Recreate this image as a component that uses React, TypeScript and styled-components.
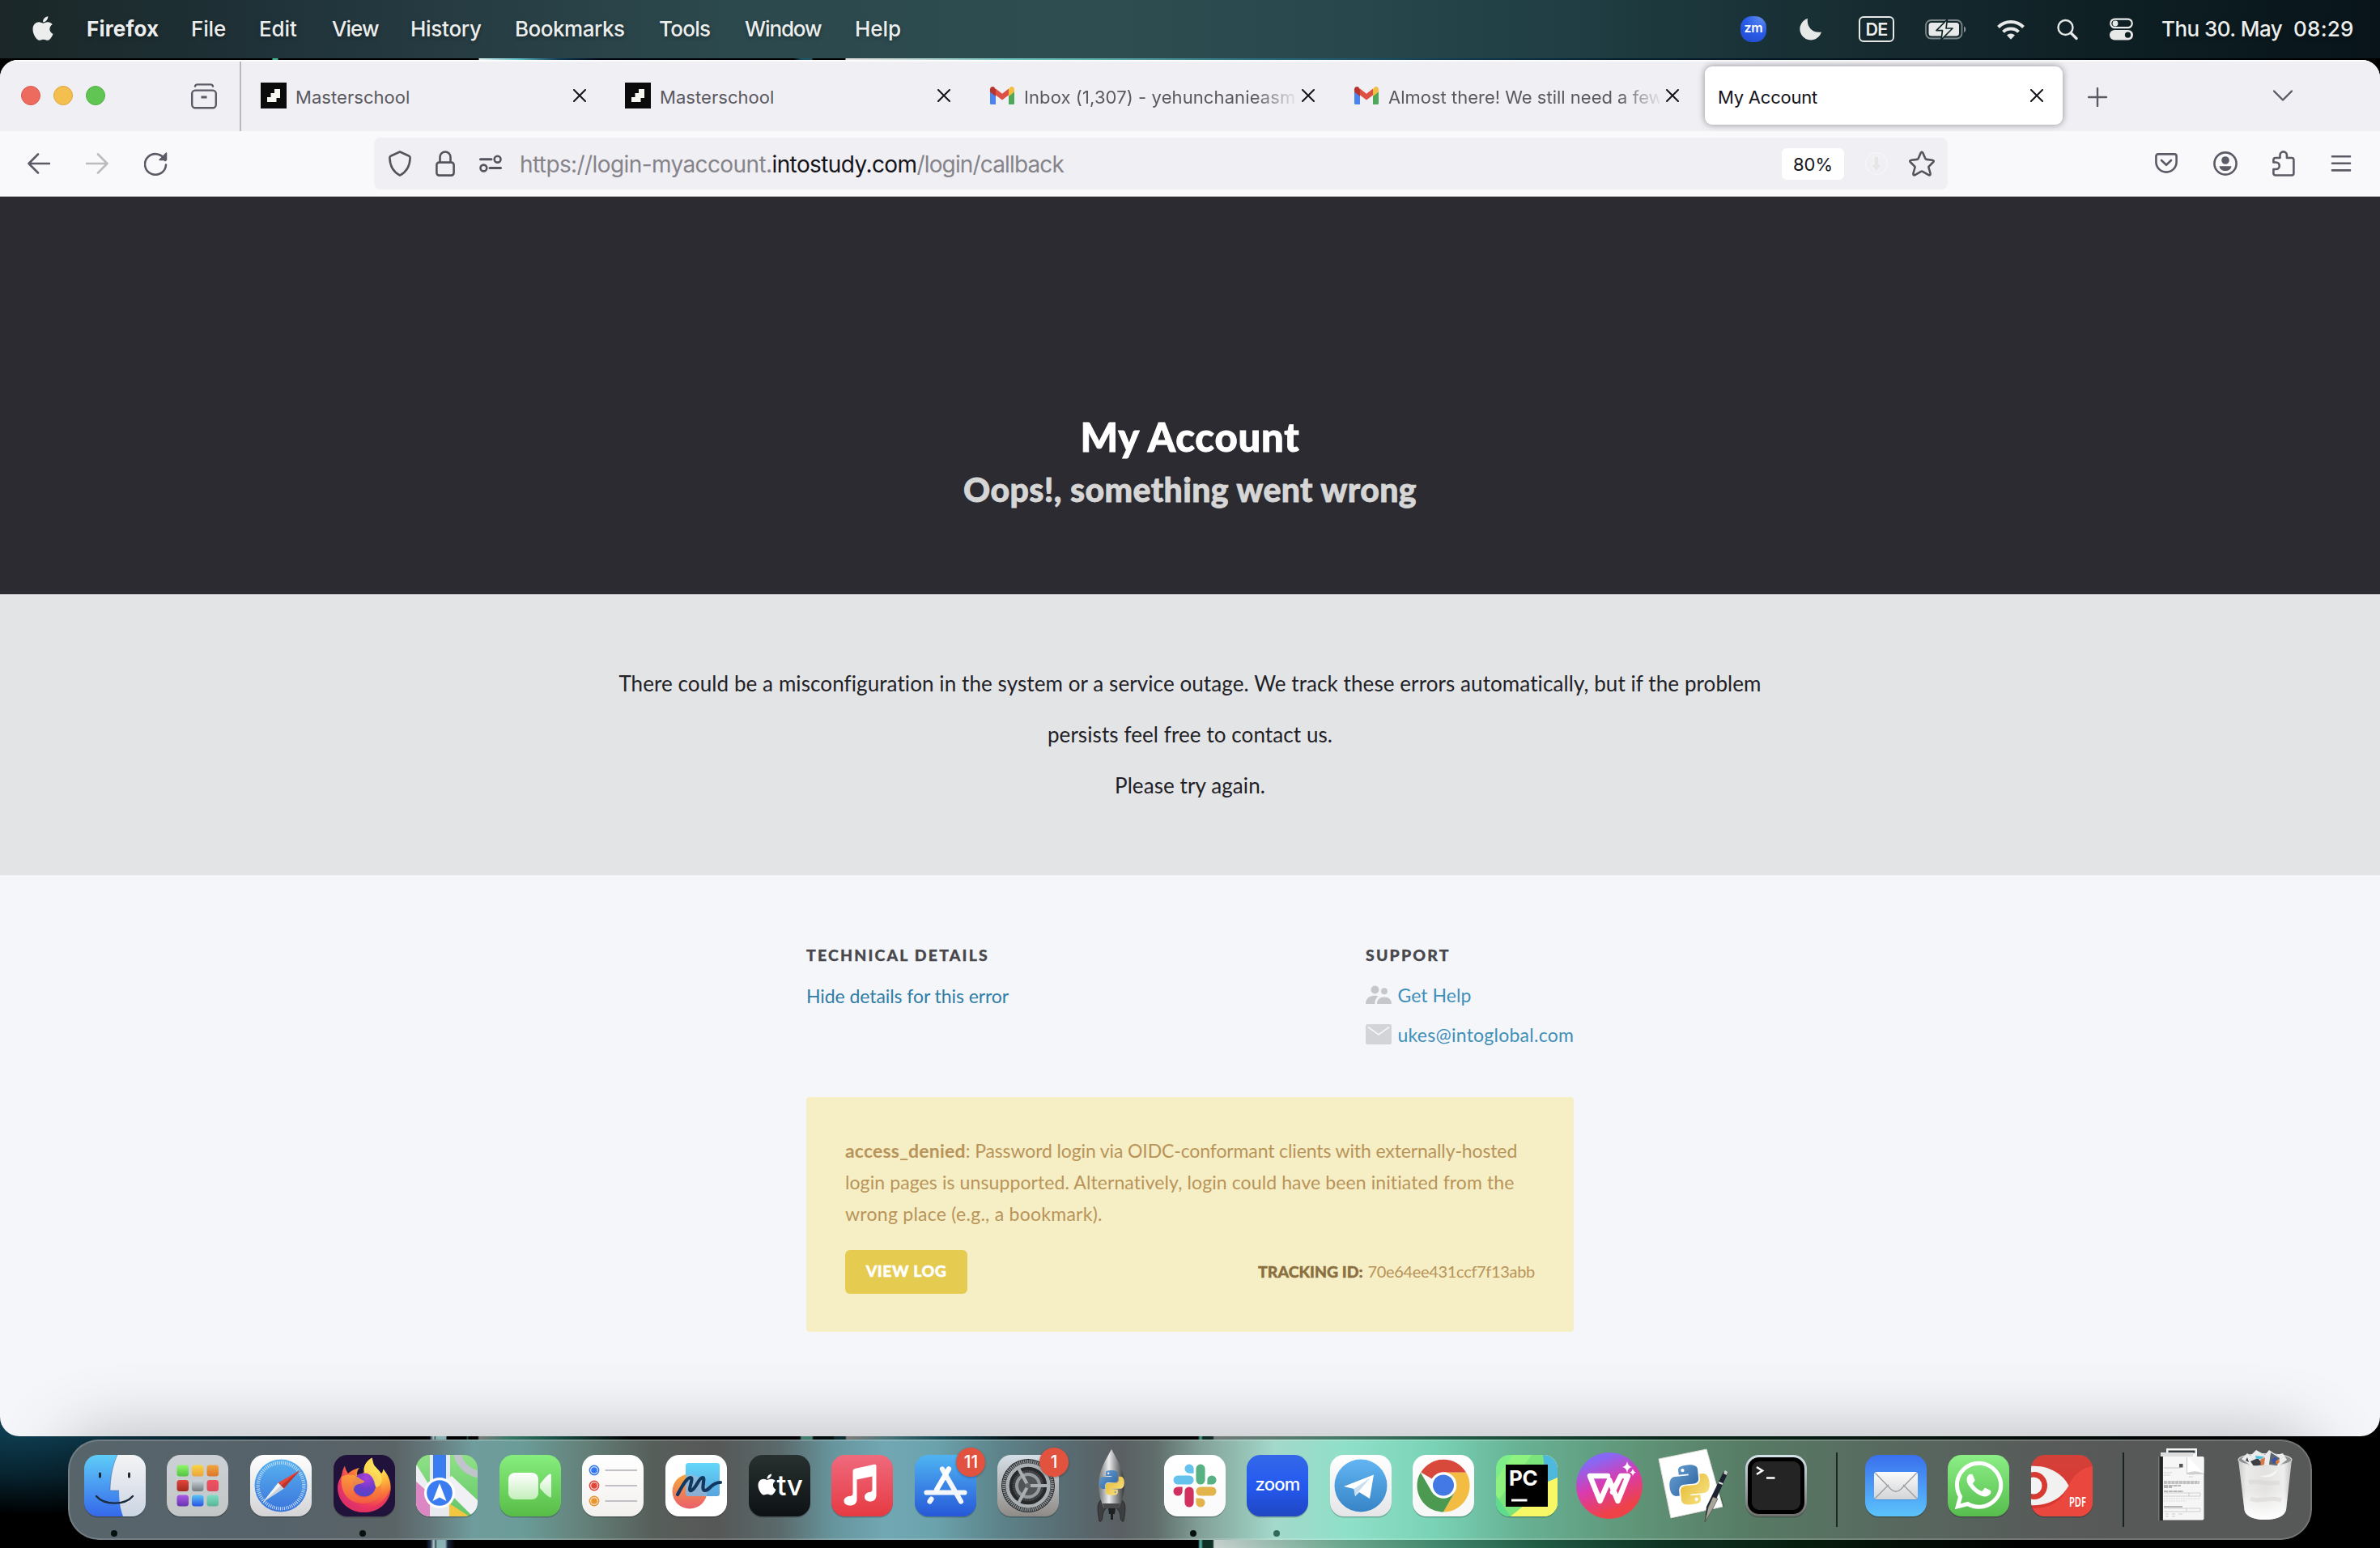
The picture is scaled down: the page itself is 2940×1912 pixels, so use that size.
import React from "react";
import styled, { createGlobalStyle } from "styled-components";
import { FaApple, FaWhatsapp } from "react-icons/fa";

const ui = `Inter, "Liberation Sans", sans-serif`;
const copy = `Lato, "Open Sans", sans-serif`;
const chrome = "#5b5b66";

const GlobalStyle = createGlobalStyle`
  * { box-sizing: border-box; }
  body { margin: 0; background: #000; }
  svg { display: block; flex: none; }
  h1, h2, h3, p { margin: 0; }
`;

/* ---------- desktop ---------- */

const Desktop = styled.div`
  width: 2940px;
  height: 1912px;
  overflow: hidden;
  display: flex;
  flex-direction: column;
  font-family: ${ui};
  background:
    linear-gradient(90deg, #000 336px, #3fb795 337px 343px, #000 344px 591px, #d9f0ec 592px, #63c0cc 640px, #0d3a58 690px, #010513 740px, #000 980px, #1e5566 990px 1003px, #000 1004px 1044px, #e4dfdc 1045px, #b9d6d2 1140px, #6fc3c0 1250px, #5aa6a8 1380px, #2b6d80 1550px, #0f3a52 1800px, #04202f 2000px, #02101a 2400px, #000 2900px) 0 72px / 2940px 2px no-repeat,
    linear-gradient(90deg, transparent 531px, #38506c 532px, #d5e9ea 536px, #3a5b62 537px, #9fced0 539px 551px, transparent 552px 576px, #1c4a40 577px 578px, transparent 579px 590px, #8a908c 592px, #3d8a74 630px, #1d5a50 690px, #000 780px, #000 988px, #4f9484 990px 1003px, #02100d 1005px 1029px, #12343a 1031px 1044px, #93908c 1046px, #4f8488 1100px, #1d5561 1160px, #021014 1260px, #000 1400px, transparent 1440px) 0 1774px / 2940px 4px no-repeat,
    linear-gradient(90deg, transparent 1480px, #4aa596 1482px 1484px, #122f28 1486px 1498px, #858d8a 1500px, #57907c 1640px, #2a6a52 1800px, #0c2e20 2050px, #04140d 2400px, #000 2800px) 0 1774px / 2940px 4px no-repeat,
    linear-gradient(90deg, transparent 526px, #24385a 532px, #dcecee 536px, #35565e 538px, #9fcdd0 540px 550px, #1b2a44 553px, transparent 562px, transparent 1480px, #58b9ab 1482px 1484px, #11382c 1486px 1498px, #e4efec 1500px, #b2d8ca 1570px, #7cc0a4 1660px, #4a9a7c 1780px, #26694f 1900px, #113c2a 2050px, #08200f 2240px, #000 2500px) 0 1902px / 2940px 10px no-repeat,
    radial-gradient(ellipse 460px 110px at 40px 1762px, #104257, #082430 55%, transparent) 0 0 / 2940px 1912px no-repeat,
    #000;
`;

/* ---------- menu bar ---------- */

const MenuBar = styled.header`
  height: 72px;
  margin-bottom: 2px;
  flex: none;
  display: flex;
  align-items: center;
  padding-left: 40px;
  color: #eceeed;
  text-shadow: 0 2px 5px rgba(0, 0, 0, 0.35);
  background: linear-gradient(90deg, #1b2728 0, #1c2c2f 150px, #20333a 350px, #263c42 560px, #2c494d 900px, #2d4d51 1350px, #28484d 1640px, #1f3d42 1960px, #15292e 2350px, #0d1e22 2650px, #08141a 2940px);
`;

const AppleMark = styled(FaApple)`
  width: 26px;
  height: 34px;
  margin: 0 41px 3px 0;
`;

const MenuItem = styled.span<{ $step: number; $track: number; $bold?: boolean }>`
  width: ${(p) => p.$step}px;
  flex: none;
  font-size: 26px;
  line-height: 71px;
  height: 72px;
  font-weight: ${(p) => (p.$bold ? 700 : 500)};
  letter-spacing: ${(p) => p.$track}px;
  white-space: nowrap;
`;

const StatusArea = styled.div`
  width: 790px;
  margin-left: auto;
  display: flex;
  align-items: center;
`;

const StatusSlot = styled.div<{ $gap?: number }>`
  margin-left: ${(p) => p.$gap ?? 0}px;
  flex: none;
`;

const ZoomDot = styled.div`
  width: 32px;
  height: 32px;
  border-radius: 14px;
  background: radial-gradient(circle at 80% 5%, #5a8bee, #2a5be8 50%, #2148c9);
  color: #fff;
  font: 600 16px/29px ${ui};
  letter-spacing: -0.2px;
  text-align: center;
  text-shadow: none;
`;

const LayoutBadge = styled.div`
  width: 44px;
  height: 32px;
  border: 2.5px solid #e6e9e8;
  border-radius: 6px;
  font: 600 21.5px/28px ${ui};
  letter-spacing: -0.8px;
  text-align: center;
`;

/* ---------- browser window ---------- */

const Window = styled.section`
  height: 1700px;
  flex: none;
  border-radius: 22px 22px 24px 24px;
  overflow: hidden;
  display: flex;
  flex-direction: column;
  background: #f5f6fa;
`;

const TabStrip = styled.div`
  height: 88px;
  flex: none;
  display: flex;
  align-items: center;
  background: #f0eff4;
  box-shadow: inset 0 2px 0 #fcfcfd;
`;

const Lights = styled.div`
  display: flex;
  gap: 16px;
  padding-left: 26px;
`;

const Light = styled.i<{ $fill: string; $edge: string }>`
  width: 24px;
  height: 24px;
  border-radius: 50%;
  background: ${(p) => p.$fill};
  border: 1px solid ${(p) => p.$edge};
`;

const RecentView = styled.div`
  width: 62px;
  height: 86px;
  margin: 2px 6px 0 106px;
  display: flex;
  align-items: center;
  border-right: 2px solid #b9b8bd;
`;

const Tab = styled.div<{ $active?: boolean }>`
  width: ${(p) => (p.$active ? 442 : 450)}px;
  margin: 0 ${(p) => (p.$active ? "6px 0 2px" : "0")};
  height: 72px;
  flex: none;
  display: flex;
  align-items: center;
  padding: 0 ${(p) => (p.$active ? "24px 0 16px" : "30px 0 18px")};
  border-radius: 9px;
  color: ${(p) => (p.$active ? "#15141a" : "#5a595f")};
  background: ${(p) => (p.$active ? "#fff" : "transparent")};
  box-shadow: ${(p) => (p.$active ? "0 0 8px rgba(0,0,0,.42)" : "none")};
`;

const Favicon = styled.div`
  width: 32px;
  height: 32px;
  margin: 0 11px 0 0;
  flex: none;
`;

const TabTitle = styled.div<{ $track?: number; $fade?: boolean }>`
  flex: 1;
  min-width: 0;
  white-space: nowrap;
  font-size: 22px;
  line-height: 32px;
  padding-top: 4px;
  letter-spacing: ${(p) => p.$track ?? 0.05}px;
  ${(p) => p.$fade && "mask-image: linear-gradient(90deg, #000 285px, transparent 340px);"}
`;

const CloseIcon = styled.svg`
  width: 16px;
  height: 16px;
  margin-left: 8px;
  stroke: #15141a;
  stroke-width: 2;
  stroke-linecap: round;
`;

const PlusIcon = styled.svg`
  margin: 3px 0 0 25px;
  stroke: ${chrome};
`;

const ChevronIcon = styled.svg`
  margin-left: 205px;
  stroke: ${chrome};
`;

const Toolbar = styled.div`
  height: 81px;
  flex: none;
  display: flex;
  align-items: center;
  padding-left: 34px;
  background: #f9f9fb;
  border-bottom: 1px solid #c9c9cc;
  stroke: ${chrome};
  fill: none;
  stroke-width: 2.6;
  stroke-linecap: round;
  stroke-linejoin: round;
`;

const NavGroup = styled.div`
  width: 428px;
  display: flex;
  gap: 44px;
`;

const AddressBar = styled.div`
  width: 1944px;
  height: 64px;
  border-radius: 8px;
  background: #f0eff4;
  display: flex;
  align-items: center;
  padding: 0 16px 0 18px;
`;

const SiteIcons = styled.div`
  display: flex;
  align-items: center;
  gap: 30px;
  margin-right: 22px;
  stroke: #55545c;
`;

const Url = styled.div`
  flex: 1;
  padding-top: 2px;
  font-size: 28px;
  line-height: 40px;
  white-space: nowrap;
  color: #85848a;
  letter-spacing: -0.6px;
  b {
    font-weight: 400;
    color: #15141a;
    letter-spacing: -0.59px;
  }
  i {
    font-style: normal;
    letter-spacing: -0.85px;
  }
`;

const ZoomLevel = styled.div`
  width: 77px;
  height: 39px;
  margin-right: 26px;
  border-radius: 6px;
  background: #fff;
  color: #15141a;
  font-size: 22px;
  line-height: 40px;
  text-align: center;
`;

const BookmarkStar = styled.svg`
  margin-left: 26px;
  stroke: #55545c;
`;

const ToolGroup = styled.div`
  margin-left: 256px;
  display: flex;
  align-items: center;
  gap: 43.5px;
`;

/* ---------- page ---------- */

const Hero = styled.div`
  height: 491px;
  flex: none;
  padding-top: 266px;
  text-align: center;
  background: #2b2b31;
  font-family: ${copy};
`;

const HeroTitle = styled.h1`
  font-size: 49px;
  line-height: 60px;
  font-weight: 900;
  letter-spacing: 0.8px;
  color: #fff;
  -webkit-text-stroke: 0.9px #fff;
`;

const HeroSubtitle = styled.h2`
  margin-top: 6px;
  font-size: 41px;
  line-height: 60px;
  font-weight: 900;
  letter-spacing: 0.37px;
  color: #d6d6d6;
  -webkit-text-stroke: 0.8px #d6d6d6;
`;

const Notice = styled.div`
  height: 347px;
  flex: none;
  padding: 79px 745px 0;
  text-align: center;
  background: #e3e4e6;
  color: #212126;
  font: 400 26px/63px ${copy};
  letter-spacing: 0.09px;
`;

const Details = styled.div`
  width: 948px;
  margin: 0 auto;
  padding-top: 84px;
  font-family: ${copy};
`;

const Columns = styled.div`
  display: grid;
  grid-template-columns: 691px 1fr;
  height: 190px;
`;

const ColumnTitle = styled.h3`
  font-size: 19.5px;
  line-height: 30px;
  font-weight: 900;
  letter-spacing: 2.15px;
  color: #47474c;
  -webkit-text-stroke: 0.3px #47474c;
`;

const ToggleLink = styled.a`
  display: block;
  margin-top: 15px;
  font-size: 23px;
  line-height: 40px;
  letter-spacing: -0.07px;
  color: #2f7da6;
`;

const SupportList = styled.div`
  margin-top: 10px;
`;

const SupportLink = styled.a<{ $track: number }>`
  height: 48.4px;
  display: flex;
  align-items: center;
  gap: 7.5px;
  font-size: 23px;
  letter-spacing: ${(p) => p.$track}px;
  color: #3f8fb8;
`;

const ErrorCard = styled.div`
  height: 290px;
  padding: 46.5px 48px 0;
  border-radius: 4px;
  background: #f6eec4;
  color: #b8945a;
`;

const ErrorLine = styled.p<{ $track: number }>`
  font-size: 23px;
  line-height: 39.4px;
  white-space: nowrap;
  letter-spacing: ${(p) => p.$track}px;
  b {
    letter-spacing: 0.2px;
  }
`;

const CardFooter = styled.div`
  margin-top: 24.5px;
  display: flex;
  align-items: center;
  justify-content: space-between;
`;

const LogButton = styled.button`
  width: 151px;
  height: 54px;
  padding: 0 0 3px;
  border: 0;
  border-radius: 6px;
  background: #e5cb50;
  color: #fff;
  font: 900 19.5px ${copy};
  letter-spacing: 0.5px;
  -webkit-text-stroke: 0.5px #fff;
`;

const Tracking = styled.div`
  padding-bottom: 3px;
  font-size: 20px;
  letter-spacing: -0.32px;
  b {
    margin-right: 1px;
    font-size: 19.5px;
    font-weight: 900;
    letter-spacing: 0;
    color: #8a6f41;
    -webkit-text-stroke: 0.4px #8a6f41;
  }
`;

/* ---------- dock ---------- */

const DockBar = styled.nav`
  position: relative;
  width: 2772px;
  height: 124px;
  margin: 4px auto 0;
  flex: none;
  display: flex;
  padding: 0 4.5px;
  border: 2px solid rgba(255, 255, 255, 0.17);
  border-radius: 38px;
  background: linear-gradient(90deg, #57656b 0, #56626a 260px, #5a6366 400px, #64797c 450px, #6f9c9c 500px, #6b9c98 560px, #638078 640px, #575f5b 720px, #565756 800px, #5a6a6c 880px, #67959d 945px, #71a7b3 1010px, #6ba3ad 1070px, #5d838a 1150px, #586a70 1240px, #5a5f62 1300px, #606e6c 1345px, #83a198 1400px, #a3d8ca 1490px, #8fe0c8 1580px, #79d2b5 1690px, #68b295 1790px, #5f9477 1940px, #577a64 2080px, #58685f 2260px, #575b59 2440px, #575858 2560px);
  background-origin: border-box;
  box-shadow: 0 0 90px rgba(0, 0, 0, 0.29);
`;

const Slot = styled.div`
  position: relative;
  width: 102.6px;
  height: 120px;
  flex: none;
  display: flex;
  justify-content: center;
  padding-top: 17px;
  svg {
    overflow: visible;
  }
`;

const RunningDot = styled.i<{ $tint?: string }>`
  position: absolute;
  left: 46px;
  top: 110px;
  width: 8px;
  height: 8px;
  border-radius: 50%;
  background: ${(p) => p.$tint ?? "#04110f"};
`;

const Badge = styled.span`
  position: absolute;
  left: 65px;
  top: 8px;
  width: 36px;
  height: 36px;
  border-radius: 50%;
  background: #e1523f;
  color: #fff;
  font: 500 21px/36px ${ui};
  text-align: center;
  box-shadow: 0 1px 3px rgba(0, 0, 0, 0.3);
`;

const Divider = styled.div`
  width: 45.5px;
  flex: none;
  display: flex;
  justify-content: center;
  padding-left: 3px;
  &::before {
    content: "";
    width: 2px;
    height: 92px;
    margin-top: 14px;
    background: rgba(10, 22, 18, 0.8);
  }
`;

/* ---------- dock icon drawings ---------- */

const Grad = ({ id, from, mid, to, x2 = 0, y2 = 1 }: { id: string; from: string; mid?: string; to: string; x2?: number; y2?: number }) => (
  <linearGradient id={id} x1="0" y1="0" x2={x2} y2={y2}>
    <stop offset="0" stopColor={from} />
    {mid && <stop offset="0.5" stopColor={mid} />}
    <stop offset="1" stopColor={to} />
  </linearGradient>
);

const Tile = ({ name, from, mid, to, children }: { name: string; from: string; mid?: string; to: string; children?: React.ReactNode }) => (
  <svg width="76" height="76" viewBox="0 0 76 76">
    <defs>
      <Grad id={`${name}-bg`} from={from} mid={mid} to={to} />
      <clipPath id={`${name}-clip`}><rect width="76" height="76" rx="17" /></clipPath>
    </defs>
    <rect y="1.5" width="76" height="76" rx="17" fill="#000" opacity="0.22" />
    <rect width="76" height="76" rx="17" fill={`url(#${name}-bg)`} />
    <g clipPath={`url(#${name}-clip)`}>{children}</g>
  </svg>
);

const Finder = () => (
  <Tile name="finder" from="#5fcdf8" to="#3568ea">
    <defs><Grad id="finder-r" from="#f4f4f5" to="#ccd5e3" /></defs>
    <path d="M41 0C35 13 32 29 32 44H43C43 56 44.500 66 48 76H76V0Z" fill="url(#finder-r)" />
    <path d="M41 0C35 13 32 29 32 44H43" fill="none" stroke="#2a4c86" strokeWidth=".8" opacity=".5" />
    <path d="M19.500 23V27M55.500 23V27" stroke="#1c2630" strokeWidth="3" strokeLinecap="round" />
    <path d="M15 51C25 62.500 50 62.500 60 51" fill="none" stroke="#1b2b3a" strokeWidth="2.400" strokeLinecap="round" />
  </Tile>
);

const launchColors: [string, string][] = [["#92f56f", "#4fc43f"], ["#f6d545", "#eca43a"], ["#f0a63e", "#dc752f"], ["#e2463a", "#a32a20"], ["#ccd6dc", "#737a7d"], ["#f0515e", "#dd4c5c"], ["#a958e6", "#6a34b2"], ["#58c6f8", "#2b53e2"], ["#7fdcc5", "#58b695"]];
const Launchpad = () => (
  <Tile name="launch" from="#ccd1d5" to="#c2c6c6">
    {launchColors.map(([a, b], i) => (
      <g key={i}>
        <defs><Grad id={`lp${i}`} from={a} to={b} /></defs>
        <rect x={12.500 + (i % 3) * 18.500} y={12.500 + Math.floor(i / 3) * 18.500} width="14.500" height="14" rx="3.500" fill={`url(#lp${i})`} />
      </g>
    ))}
  </Tile>
);

const Safari = () => (
  <Tile name="safari" from="#ffffff" to="#d4d4d6">
    <defs><Grad id="saf" from="#58b2ef" to="#3a74dc" /></defs>
    <circle cx="38" cy="38" r="32.500" fill="url(#saf)" />
    <circle cx="38" cy="38" r="28.300" fill="none" stroke="#d4e8fb" strokeWidth="4.200" strokeDasharray=".9 1.570" />
    <path d="M61.500 19L34.500 34.500L41.500 41.500Z" fill="#e54838" />
    <path d="M16 58L34.500 34.500L41.500 41.500Z" fill="#f3f4f5" />
    <path d="M61.500 19L38 38L41.500 41.500Z" fill="#b93529" />
    <path d="M16 58L38 38L41.500 41.500Z" fill="#ccd3da" />
  </Tile>
);

const Firefox = () => (
  <Tile name="ff" from="#20123a" to="#20123a">
    <defs>
      <radialGradient id="ff-b" cx=".78" cy=".14" r=".95"><stop offset="0" stopColor="#fff36b" /><stop offset=".3" stopColor="#fdbb39" /><stop offset=".55" stopColor="#f9733a" /><stop offset=".8" stopColor="#ee3a5c" /><stop offset="1" stopColor="#d82c74" /></radialGradient>
      <radialGradient id="ff-p" cx=".6" cy=".2" r=".8"><stop offset="0" stopColor="#ac3fdc" /><stop offset=".6" stopColor="#6a3ccb" /><stop offset="1" stopColor="#5146c8" /></radialGradient>
      <Grad id="ff-h" from="#fba93b" to="#f5603c" />
    </defs>
    <path d="M14 13.500C14.500 17 16 20 18 23C20 21 24 18 32 16C29 19 29 22 29 25L38 22C36 14 41 7 47.500 3.500C47 12 53 15 57.500 21C60 25 60.500 21 61.500 17.500C68 25 71.500 34 70.500 43C68.500 59.500 54.500 71 38 71C20 71 5.500 58 5 41C5 33 8.500 29 10 25C11 20 12 16 14 13.500Z" fill="url(#ff-b)" />
    <circle cx="38" cy="37" r="14.500" fill="url(#ff-p)" />
    <path d="M10 27C17 23 25 24 31 28C34 31 37 31 38.500 33C36 36 30 35.500 27 38C23 42 25 49 31 51.500C37 54 46 53 50 46C54 39 52 30 47 25C44 23 40 22 36 22C42 19 50 21 55 27C62 38 59 51 50 56.500C38 63 22 60 15 50C10 43 9 34 10 27Z" fill="url(#ff-h)" opacity=".88" />
    <path d="M47 25C52 23 50 10 47.500 3.500C42 7 36 14 38 22C43 21 50 28 51 37C53 44 62 36 59 27C56 20 50 17 47.500 12Z" fill="#fde05a" opacity=".8" />
    <path d="M5.500 43C8 58 22 66 36 66C54 66 66 55 70.500 41C70 59 56 71 38 71C20 71 6 59 5.500 43Z" fill="#e6325f" opacity=".7" />
  </Tile>
);

const Maps = () => (
  <Tile name="maps" from="#8fe087" to="#63c768">
    <path d="M-2 8L40 76H-2Z" fill="#eeeef2" />
    <path d="M0 33L22 52V76H0Z" fill="#dc86c4" />
    <path d="M17 0H42V76H17Z" fill="#e9eaee" />
    <path d="M28 34L78 84V58L44 26Z" fill="#f1f1f5" />
    <path d="M41 76V60L66 76Z" fill="#f1c741" />
    <path d="M50 -6A33 33 0 0 0 78 24" fill="none" stroke="#c2c4cb" strokeWidth="9" />
    <path d="M21 0H37V30H21Z" fill="#3a7df0" />
    <circle cx="29" cy="47" r="19" fill="#fff" />
    <circle cx="29" cy="47" r="15.800" fill="#3b7cf0" />
    <path d="M29 35L37.500 57L29 52.500L20.500 57Z" fill="#fff" />
  </Tile>
);

const FaceTime = () => (
  <Tile name="ft" from="#86ee7e" to="#58bd47">
    <defs><Grad id="ft-c" from="#ffffff" to="#c3efba" /></defs>
    <rect x="11" y="22" width="37" height="33" rx="8" fill="url(#ft-c)" />
    <path d="M50 36C54 31 58 26 62 23.500Q64 23 64 25V51Q64 53 62 52.500C58 50 54 46 50 41Z" fill="url(#ft-c)" />
  </Tile>
);

const Reminders = () => (
  <Tile name="rem" from="#ffffff" to="#f3f1ee">
    {["#3378ee", "#e0473a", "#ea9430"].map((c, i) => (
      <g key={c}>
        <circle cx="15" cy={19 + i * 19} r="5.600" fill="none" stroke={c} strokeWidth="1.600" />
        <circle cx="15" cy={19 + i * 19} r="3.800" fill={c} />
        <path d={`M28.500 ${19 + i * 19}H68`} stroke="#c2c2c6" strokeWidth="1.800" />
      </g>
    ))}
  </Tile>
);

const Freeform = () => (
  <Tile name="free" from="#ffffff" to="#ffffff">
    <defs><Grad id="fr-o" from="#f3a93a" to="#ec5f6c" /><Grad id="fr-b" from="#63d7fa" to="#58a4dd" /></defs>
    <circle cx="30" cy="45" r="21.500" fill="url(#fr-o)" />
    <rect x="25" y="10" width="42" height="41" rx="3.500" fill="url(#fr-b)" />
    <path d="M25 25A21.500 21.500 0 0 1 51 48V51H28Q25 51 25 48Z" fill="#b2b4c8" opacity=".55" />
    <path d="M15 49C20 40 26 28 31 28C36 28 26 46 32 44C38 42 41 28 46 28C50 28 43 44 49 44C55 44 56 34 68 34" fill="none" stroke="#12385f" strokeWidth="4.200" strokeLinecap="round" />
  </Tile>
);

const AppleTv = () => (
  <Tile name="tv" from="#28312f" to="#0d1114">
    <FaApple x="7.500" y="21.500" size={30} color="#fff" />
    <text x="34.500" y="49.500" fill="#fff" fontFamily="Inter, sans-serif" fontSize="35" fontWeight="500" letterSpacing="-.5">tv</text>
  </Tile>
);

const Music = () => (
  <Tile name="music" from="#ef6a7d" to="#e63a42">
    <path d="M26.500 20Q26.500 17.500 29 17L53 11.800Q55.500 11.300 55.500 14V50C55.500 55 52 57.500 48 57.500C43.500 57.500 41 55 41 52C41 48 44.500 46.500 47 46Q50.500 45.500 50.500 43V26.500L31.500 30.500V55C31.500 60 28 62.500 23 62.500C18.500 62.500 15.500 60 15.500 57C15.500 53 19 51.500 22 51Q26.500 50.500 26.500 48Z" fill="#fff" />
  </Tile>
);

const AppStore = () => (
  <Tile name="store" from="#4fb4f2" to="#2658d8">
    <g stroke="#f3f7fc" strokeWidth="6.200" strokeLinecap="round" fill="none">
      <path d="M42 17.500L27 43M34 17.500L57 57.500M14.500 46.500H61.500M20.500 54.500L18.500 57.500" />
    </g>
    <path d="M42 17.500L27 43" stroke="#fff" strokeWidth="6" strokeLinecap="round" />
  </Tile>
);

const Settings = () => (
  <Tile name="set" from="#d6dfe7" to="#8f8b87">
    <circle cx="38" cy="38" r="33" fill="#27282a" />
    <circle cx="38" cy="38" r="30" fill="none" stroke="#8f969a" strokeWidth="4" strokeDasharray="1.500 1" />
    <circle cx="38" cy="38" r="25.500" fill="none" stroke="#a9afb2" strokeWidth="4.500" />
    <circle cx="38" cy="38" r="19" fill="#515457" />
    <circle cx="38" cy="38" r="17.500" fill="none" stroke="#33363a" strokeWidth="4" strokeDasharray="1.400 1" />
    <circle cx="38" cy="38" r="14" fill="none" stroke="#949a9e" strokeWidth="4" />
    <path d="M38 38H62M38 38L26.500 17.500M38 38L26.500 58.500" stroke="#a9afb2" strokeWidth="4" />
    <circle cx="38" cy="38" r="3.200" fill="#5e6265" />
  </Tile>
);

const snake = "M14.25.18l.9.2.73.26.59.3.45.32.34.34.25.34.16.33.1.3.04.26.02.2-.01.13V8.5l-.05.63-.13.55-.21.46-.26.38-.3.31-.33.25-.35.19-.35.14-.33.1-.3.07-.26.04-.21.02H8.77l-.69.05-.59.14-.5.22-.41.27-.33.32-.27.35-.2.36-.15.37-.1.35-.07.32-.04.27-.02.21v3.06H3.17l-.21-.03-.28-.07-.32-.12-.35-.18-.36-.26-.36-.36-.35-.46-.32-.59-.28-.73-.21-.88-.14-1.05-.05-1.23.06-1.22.16-1.04.24-.87.32-.71.36-.57.4-.44.42-.33.42-.24.4-.16.36-.1.32-.05.24-.01h.16l.06.01h8.16v-.83H6.18l-.01-2.75-.02-.37.05-.34.11-.31.17-.28.25-.26.31-.23.38-.2.44-.18.51-.15.58-.12.64-.1.71-.06.77-.04.84-.02 1.27.05zm-6.3 1.98l-.23.33-.08.41.08.41.23.34.33.22.41.09.41-.09.33-.22.23-.34.08-.41-.08-.41-.23-.33-.33-.22-.41-.09-.41.09z";
const Snakes = ({ transform }: { transform: string }) => (
  <g transform={transform}>
    <defs><Grad id="snake-b" from="#6ba4d8" to="#2a5f9b" x2={1} /><Grad id="snake-y" from="#fbe88a" to="#e2b62e" x2={1} /></defs>
    <path d={snake} fill="url(#snake-b)" />
    <path d={snake} fill="url(#snake-y)" transform="rotate(180 12 12)" />
  </g>
);

const Rocket = () => (
  <svg width="76" height="76" viewBox="0 0 76 76">
    <defs>
      <linearGradient id="rk"><stop offset="0" stopColor="#6f7173" /><stop offset=".4" stopColor="#eceded" /><stop offset=".7" stopColor="#8b8d8f" /><stop offset="1" stopColor="#333537" /></linearGradient>
    </defs>
    <path d="M26 55C20 59 20 66 23 82C26 83 27 79 27 75C28 69 31 66 33 65M50 55C56 59 56 66 53 82C50 83 49 79 49 75C48 69 45 66 43 65" fill="#3c3e40" stroke="#232526" strokeWidth=".8" />
    <path d="M38 -7C31 6 22 20 22 36C22 47 25 58 29 66H47C51 58 54 47 54 36C54 20 45 6 38 -7Z" fill="url(#rk)" />
    <path d="M34 66H43L42 73H40V80H37V73H35Z" fill="#1d1f20" />
    <path d="M29 66H47L49 60H27Z" fill="#48494b" />
    <Snakes transform="translate(23 19) scale(1.280)" />
  </svg>
);

const slackParts: [string, string][] = [
  ["#d0315f", "M5.042 15.165a2.528 2.528 0 0 1-2.52 2.523A2.528 2.528 0 0 1 0 15.165a2.527 2.527 0 0 1 2.522-2.52h2.52v2.52zM6.313 15.165a2.527 2.527 0 0 1 2.521-2.52 2.527 2.527 0 0 1 2.521 2.52v6.313A2.528 2.528 0 0 1 8.834 24a2.528 2.528 0 0 1-2.521-2.522v-6.313z"],
  ["#65c2ec", "M8.834 5.042a2.528 2.528 0 0 1-2.521-2.52A2.528 2.528 0 0 1 8.834 0a2.528 2.528 0 0 1 2.521 2.522v2.520H8.834zM8.834 6.313a2.528 2.528 0 0 1 2.521 2.521 2.528 2.528 0 0 1-2.521 2.521H2.522A2.528 2.528 0 0 1 0 8.834a2.528 2.528 0 0 1 2.522-2.521h6.312z"],
  ["#57b182", "M18.956 8.834a2.528 2.528 0 0 1 2.522-2.521A2.528 2.528 0 0 1 24 8.834a2.528 2.528 0 0 1-2.522 2.521h-2.522V8.834zM17.688 8.834a2.528 2.528 0 0 1-2.523 2.521 2.527 2.527 0 0 1-2.520-2.521V2.522A2.527 2.527 0 0 1 15.165 0a2.528 2.528 0 0 1 2.523 2.522v6.312z"],
  ["#e3b34c", "M15.165 18.956a2.528 2.528 0 0 1 2.523 2.522A2.528 2.528 0 0 1 15.165 24a2.527 2.527 0 0 1-2.520-2.522v-2.522h2.520zM15.165 17.688a2.527 2.527 0 0 1-2.520-2.523 2.526 2.526 0 0 1 2.520-2.520h6.313A2.527 2.527 0 0 1 24 15.165a2.528 2.528 0 0 1-2.522 2.523h-6.313z"],
];
const Slack = () => (
  <Tile name="slack" from="#ffffff" to="#fafafa">
    <g transform="translate(11.500 11.500) scale(2.210)">{slackParts.map(([c, d]) => <path key={c} d={d} fill={c} />)}</g>
  </Tile>
);

const Zoom = () => (
  <Tile name="zoom" from="#3468e8" mid="#2459f0" to="#2046c2">
    <text x="38" y="44" textAnchor="middle" fill="#fff" fontFamily="Inter, sans-serif" fontSize="22" fontWeight="500" letterSpacing="-.8">zoom</text>
  </Tile>
);

const Telegram = () => (
  <Tile name="tg" from="#ffffff" to="#e6e6e8">
    <defs><Grad id="tg-c" from="#62b5f2" to="#3784c6" /></defs>
    <circle cx="38" cy="38" r="32.500" fill="url(#tg-c)" />
    <path d="M17 39L54 24.500L49 54L36 46L31 51L29.500 42Z" fill="#fff" />
    <path d="M29.500 42L50 28L35 45.500L31 51Z" fill="#c9dfef" />
  </Tile>
);

const Chrome = () => (
  <Tile name="chr" from="#fdfefd" to="#f6f7f6">
    <path d="M38 38L10.300 21.500A32.500 32.500 0 0 1 66.200 21.750H38Z" fill="#d9493b" />
    <path d="M38 21.750H66.200A32.500 32.500 0 0 1 38 70.500L52 46Z" fill="#f2bd42" />
    <path d="M9.850 21.750A32.500 32.500 0 0 0 38 70.500L52.100 46.100L24 46.100Z" fill="#4c9a52" />
    <circle cx="38" cy="37.500" r="16.300" fill="#fff" />
    <circle cx="38" cy="37.500" r="13" fill="#4379e4" />
  </Tile>
);

const PyCharm = () => (
  <Tile name="pc" from="#7ef086" to="#77e38c">
    <path d="M50 0H76V76H60Z" fill="#fbf765" />
    <path d="M0 50L44 0H60L62 30L20 76H0Z" fill="#7be57c" />
    <path d="M44 0L0 60V30L20 0Z" fill="#8ef27f" />
    <path d="M58 0H76V28L62 34Z" fill="#4fb8dd" />
    <path d="M18 76L62 40L76 28V76Z" fill="#f8f866" />
    <path d="M0 50L18 76H0Z" fill="#5fdb8e" />
    <rect x="12" y="12" width="52" height="52" fill="#000" />
    <text x="16" y="38" fill="#fff" fontFamily="Inter, sans-serif" fontSize="26" fontWeight="700" letterSpacing="-.4">PC</text>
    <path d="M19 56H38.500" stroke="#fff" strokeWidth="3.200" />
  </Tile>
);

const Wps = () => (
  <svg width="76" height="76" viewBox="0 0 76 76">
    <defs><linearGradient id="wps" x1=".3" y1="0" x2=".7" y2="1"><stop offset=".1" stopColor="#8768f5" /><stop offset=".45" stopColor="#d93bb0" /><stop offset=".85" stopColor="#ee4248" /></linearGradient></defs>
    <circle cx="38" cy="38" r="41" fill="url(#wps)" />
    <path d="M36 26H14L26.500 57L38 31L48.500 57L61 26H52L42 46" fill="none" stroke="#fff" strokeWidth="6.500" strokeLinejoin="round" strokeLinecap="round" />
    <path d="M60 8Q61 14 66 15Q61 16 60 22Q59 16 54 15Q59 14 60 8ZM67 17Q68 21 71 21.500Q68 22 67 26Q66 22 63 21.500Q66 21 67 17Z" fill="#fff" />
  </svg>
);

const Idle = () => (
  <svg width="76" height="76" viewBox="0 0 76 76">
    <path d="M-4 7L55 -6L77 64L12 79Z" fill="#000" opacity=".25" />
    <path d="M-4 5L55 -7L75 64L11 78Z" fill="#fff" stroke="#dcdcd6" />
    <Snakes transform="translate(7 15) rotate(-6) scale(2.050)" />
    <path d="M76 21L81 23L62 66L53 83L55 64Z" fill="#1d2230" />
    <path d="M63 52L69 54L62 68L53 83L57 65Z" fill="#a9a79a" stroke="#4a4a46" strokeWidth=".7" />
    <path d="M78 19L81 21L80 25L76 23Z" fill="#cfd0cc" />
    <path d="M70 34L75 36" stroke="#e2e2de" strokeWidth="2" />
  </svg>
);

const Terminal = () => (
  <Tile name="term" from="#d5e3ea" to="#6e6e6c">
    <rect x="3" y="3" width="70" height="70" rx="14" fill="#000" />
    <rect x="8" y="8" width="60" height="60" rx="9" fill="#242424" />
    <path d="M14 15L21 19.500L14 24M26 28.500H36.500" fill="none" stroke="#fff" strokeWidth="2.600" />
  </Tile>
);

const Mail = () => (
  <Tile name="mail" from="#3a70ee" to="#5cc3fb">
    <defs><Grad id="mail-e" from="#fbfbfb" to="#d3d4d6" /></defs>
    <rect x="11" y="22" width="54" height="34" rx="3.500" fill="#1d5cab" opacity=".35" />
    <rect x="11" y="21" width="54" height="34" rx="3.500" fill="url(#mail-e)" />
    <path d="M12.500 53.500L29 37M63.500 53.500L47 37M12.500 22.500L32 42.500Q38 48 44 42.500L63.500 22.500" fill="none" stroke="#9a9b9e" strokeWidth="1.300" />
  </Tile>
);

const WhatsAppTile = () => (
  <Tile name="wa" from="#8bee86" to="#57bd4d">
    <FaWhatsapp x="4.500" y="3.500" size={68} color="#fff" />
  </Tile>
);

const PdfExpert = () => (
  <Tile name="pdf" from="#d4413a" to="#d9352c">
    <path d="M0 66C20 66 38 60 46 38C54 22 64 16 76 14V76H0Z" fill="#ea483e" />
    <path d="M-2 14C20 12 38 22 46.500 38C38 54 20 64 -2 62Z" fill="#f1f1f1" />
    <ellipse cx="4" cy="38" rx="16" ry="17" fill="#d63a31" />
    <ellipse cx="3" cy="38" rx="10.500" ry="10.500" fill="#f4f4f4" />
    <text x="47" y="64" fill="#fff" fontFamily="'Noto Sans', sans-serif" fontSize="16" fontWeight="600" textLength="21" lengthAdjust="spacingAndGlyphs">PDF</text>
  </Tile>
);

const Papers = () => (
  <svg width="76" height="76" viewBox="0 0 76 76">
    <defs><linearGradient id="spine"><stop offset="0" stopColor="#8a8a8a" /><stop offset=".5" stopColor="#151515" /><stop offset="1" stopColor="#3a3a3a" /></linearGradient></defs>
    <rect x="19" y="-8" width="38" height="20" fill="#f5f5f5" />
    <rect x="21.500" y="-5.500" width="33" height="3" fill="#353c42" />
    <rect x="12" y="-3" width="40" height="20" fill="#dedede" />
    <rect x="10" y="2" width="55.500" height="78.500" rx="2" fill="#f6f6f6" />
    <rect x="9" y="2" width="6" height="79" fill="url(#spine)" />
    <g stroke="#a3a3a3" strokeWidth=".8" fill="none">
      <path d="M16 16H36" strokeWidth=".6" />
      <path d="M16 22H26M16 25H24M47 24H54M47 27H52" strokeDasharray="3 .6" opacity=".6" />
      <path d="M16 33H60M16 35H60" strokeDasharray="4 .7" stroke="#8a8a8a" strokeWidth="1" />
      <path d="M16 38H37M16 40H26M16 45H40" stroke="#555" strokeDasharray="5 .8" />
      <path d="M16 47H61V51H16M47 47V51" opacity=".6" />
      <path d="M16 54H61M16 57H44" opacity=".45" strokeDasharray="2 1" />
      <path d="M16 64H39" stroke="#555" />
      <path d="M16 66H61V70H16M44 66V70" opacity=".6" />
      <path d="M18 73H22M26 73H30M34 73H39M18 76H22M26 76H30" opacity=".6" />
    </g>
    <rect x="35" y="11" width="4.500" height="4.500" fill="#555" />
    <path d="M44 2V24H65.500Z" fill="#cfcfcf" />
    <path d="M45 2V22Q56 18 64.500 23Q58 14 45 2Z" fill="#fff" />
    <path d="M46 2L65.500 22V4Q65.500 2 63.500 2Z" fill="#f6f6f6" />
  </svg>
);

const Trash = () => (
  <svg width="76" height="76" viewBox="0 0 76 76">
    <defs>
      <linearGradient id="can"><stop offset="0" stopColor="#c9caca" /><stop offset=".15" stopColor="#ebebea" /><stop offset=".5" stopColor="#e3e2e0" /><stop offset=".85" stopColor="#eeeeed" /><stop offset="1" stopColor="#bfc0c0" /></linearGradient>
      <Grad id="can-s" from="#ffffff00" mid="#ffffff00" to="#ffffff" />
    </defs>
    <ellipse cx="38" cy="6" rx="33" ry="7.500" fill="#8d9090" stroke="#dadada" strokeWidth="1.200" />
    <path d="M9 5L16 -2L20 1L27 -6L38 0L43 -6L52 0L60 -2L65 6L56 13H20Z" fill="#ececec" />
    <path d="M43 12L45 -3L56 4L53 13Z" fill="#5c6470" />
    <path d="M20 8L29 4L36 12L24 14ZM14 7L18 9L16 3Z" fill="#3c3f43" />
    <path d="M26 1L37 2L34 5L27 5Z" fill="#54c1d8" />
    <path d="M32 6L38 3L37 12L33 13Z" fill="#d9774a" />
    <path d="M46 6L51 2L54 8L49 11Z" fill="#3a56a8" />
    <path d="M51 8L55 5L56 9L52 12Z" fill="#de7a35" />
    <path d="M5 6C8 11 20 14 38 14C56 14 68 11 71 6L64 68C62 76 52 80 38 80C24 80 14 76 12.500 68Z" fill="url(#can)" />
    <path d="M5 6C8 11 20 14 38 14C56 14 68 11 71 6L64 68C62 76 52 80 38 80C24 80 14 76 12.500 68Z" fill="url(#can-s)" />
    <path d="M32 26C42 26 50 22 54 17C52 26 42 30 32 26Z" fill="#f6f6f5" />
    <path d="M18 34C28 30 40 38 56 34M20 54C32 60 44 50 58 56" stroke="#d6d4d2" strokeWidth="5" fill="none" opacity=".5" />
  </svg>
);

/* ---------- tab data ---------- */

const MasterschoolMark = () => (
  <svg width="32" height="32" viewBox="0 0 32 32">
    <rect width="32" height="32" fill="#0b0b0b" />
    <path d="M8 18H12.500V13H17V8H24V19H19.500V24H8Z" fill="#f7f7f2" />
  </svg>
);

const GmailMark = () => (
  <svg width="32" height="32" viewBox="0 0 32 32">
    <path d="M1 9V26Q1 27 2.500 27H8V14Z" fill="#4c84ee" />
    <path d="M31 9V26Q31 27 29.500 27H24V14Z" fill="#4fa75a" />
    <path d="M24 8.500V17L31 11.500V8.500C31 5 27.500 4 25.500 6Z" fill="#f3bd42" />
    <path d="M8 8.500V17L1 11.500V8.500C1 5 4.500 4 6.500 6Z" fill="#b8342c" />
    <path d="M8 7.500L16 13.700L24 7.500V15.500L16 21.500L8 15.500Z" fill="#dd5144" />
  </svg>
);

const Close = () => (
  <CloseIcon viewBox="0 0 16 16"><path d="M1 1L15 15M15 1L1 15" /></CloseIcon>
);

const menus: [string, number, number][] = [
  ["File", 84, -0.14], ["Edit", 90, -0.1], ["View", 97, -0.94], ["History", 129, -0.28],
  ["Bookmarks", 178, -0.48], ["Tools", 106, -0.73], ["Window", 136, -1.12], ["Help", 80, -0.06],
];

const tabs = [
  { icon: <MasterschoolMark />, title: "Masterschool" },
  { icon: <MasterschoolMark />, title: "Masterschool" },
  { icon: <GmailMark />, title: "Inbox (1,307) - yehunchanieasm", fade: true, track: 0.1 },
  { icon: <GmailMark />, title: "Almost there! We still need a few", fade: true, track: 0 },
];

export default function App() {
  return (
    <Desktop>
      <GlobalStyle />
      <MenuBar>
        <AppleMark />
        <MenuItem $step={129} $track={0.17} $bold>Firefox</MenuItem>
        {menus.map(([label, step, track]) => <MenuItem key={label} $step={step} $track={track}>{label}</MenuItem>)}
        <StatusArea>
          <StatusSlot><ZoomDot>zm</ZoomDot></StatusSlot>
          <StatusSlot $gap={41}>
            <svg width="28" height="28" viewBox="0 0 28 28"><path d="M10 .8C8.500 10 15 19.500 27 17.600A13.600 13.600 0 1 1 10 .8Z" fill="#e6e9e8" /></svg>
          </StatusSlot>
          <StatusSlot $gap={45}><LayoutBadge>DE</LayoutBadge></StatusSlot>
          <StatusSlot $gap={38}>
            <svg width="51" height="26" viewBox="0 0 51 26">
              <rect x="1" y="2" width="44.500" height="22.500" rx="6.500" fill="none" stroke="#e6e9e8" strokeWidth="1.800" opacity=".5" />
              <rect x="4.500" y="5" width="37.500" height="16.500" rx="3.500" fill="#e6e9e8" />
              <path d="M48 9.500C51 10.500 51 16 48 17Z" fill="#e6e9e8" opacity=".55" />
              <path d="M27.500 1L14 14.700H21.500L20 26L34 12H26Z" fill="#e6e9e8" stroke="#12262a" strokeWidth="1.700" strokeLinejoin="round" />
            </svg>
          </StatusSlot>
          <StatusSlot $gap={38}>
            <svg width="34" height="25" viewBox="0 0 34 25" fill="none" stroke="#e6e9e8" strokeWidth="4">
              <path d="M1.500 9.500A22 22 0 0 1 32.500 9.500M7.500 15.300A13.500 13.500 0 0 1 26.500 15.300" />
              <path d="M17 24.700L12 19.500Q17 15.500 22 19.500Z" fill="#e6e9e8" stroke="none" />
            </svg>
          </StatusSlot>
          <StatusSlot $gap={40}>
            <svg width="26" height="27" viewBox="0 0 26 27" fill="none" stroke="#e6e9e8" strokeLinecap="round">
              <circle cx="10.500" cy="11" r="9" strokeWidth="2.400" /><path d="M17.500 18L24 24.500" strokeWidth="3.200" />
            </svg>
          </StatusSlot>
          <StatusSlot $gap={39}>
            <svg width="29" height="28" viewBox="0 0 29 28">
              <rect x="1.200" y="1.600" width="26.600" height="10.600" rx="5.300" fill="none" stroke="#e6e9e8" strokeWidth="2.200" />
              <circle cx="7" cy="7" r="3.400" fill="#e6e9e8" />
              <rect y="15" width="29" height="12.500" rx="6.200" fill="#e6e9e8" />
              <circle cx="22.500" cy="21.200" r="3.600" fill="#0d1e22" />
            </svg>
          </StatusSlot>
          <StatusSlot $gap={35} />
          <MenuItem $step={163} $track={-0.55}>Thu 30. May</MenuItem>
          <MenuItem $step={80} $track={0.24}>08:29</MenuItem>
        </StatusArea>
      </MenuBar>

      <Window>
        <TabStrip>
          <Lights>
            <Light $fill="#ed6a5f" $edge="#d9584d" />
            <Light $fill="#f5bf4f" $edge="#dba73c" />
            <Light $fill="#61c554" $edge="#4fae41" />
          </Lights>
          <RecentView>
            <svg width="32" height="32" viewBox="0 0 32 32" fill="none" stroke={chrome} strokeWidth="2.400" strokeLinecap="round">
              <rect x="1.200" y="8.600" width="29.600" height="21.600" rx="4" />
              <path d="M5 3.600Q5.500 1.400 8 1.400H24Q26.500 1.400 27 3.600" />
              <path d="M12.500 17H19.500" strokeWidth="3" strokeLinecap="butt" />
            </svg>
          </RecentView>
          {tabs.map((t, i) => (
            <Tab key={i}>
              <Favicon>{t.icon}</Favicon>
              <TabTitle $fade={t.fade} $track={t.track}>{t.title}</TabTitle>
              <Close />
            </Tab>
          ))}
          <Tab $active><TabTitle $track={-0.23}>My Account</TabTitle><Close /></Tab>
          <PlusIcon width="24" height="24" viewBox="0 0 24 24" strokeWidth="2.400" strokeLinecap="round"><path d="M12 1V23M1 12H23" /></PlusIcon>
          <ChevronIcon width="24" height="14" viewBox="0 0 24 14" fill="none" strokeWidth="2.400" strokeLinecap="round" strokeLinejoin="round"><path d="M1 1.500L12 12.500L23 1.500" /></ChevronIcon>
        </TabStrip>

        <Toolbar>
          <NavGroup>
            <svg width="28" height="28" viewBox="0 0 28 28"><path d="M27 15H1.500M13 3.500L1.500 15L13 26.500" /></svg>
            <svg width="28" height="28" viewBox="0 0 28 28" stroke="#bcbcc0"><path d="M1 15H26.500M15 3.500L26.500 15L15 26.500" /></svg>
            <svg width="30" height="30" viewBox="0 0 30 30">
              <path d="M26 11A13 12.800 0 1 0 27 16.500" />
              <path d="M27.500 2V10.500H19Z" fill={chrome} strokeWidth="1.500" />
            </svg>
          </NavGroup>
          <AddressBar>
            <SiteIcons>
              <svg width="28" height="32" viewBox="0 0 28 32"><path d="M14 1.500L25.500 6.800Q26.700 7.400 26.600 9C26.300 19 22 26.500 14 30.600C6 26.500 1.700 19 1.400 9Q1.300 7.400 2.500 6.800Z" /></svg>
              <svg width="24" height="32" viewBox="0 0 24 32"><rect x="1.400" y="14.600" width="21.200" height="16" rx="3" /><path d="M5.500 14.500V8A6.500 6.500 0 0 1 18.500 8V14.500" /></svg>
              <svg width="28" height="22" viewBox="0 0 28 22"><path d="M1.500 5.700H15M13 16.500H26.500" strokeWidth="3" /><circle cx="22.600" cy="5.700" r="3.900" /><circle cx="5.400" cy="16.500" r="3.900" /></svg>
            </SiteIcons>
            <Url>https://login-myaccount.<b>intostudy.com</b><i>/login/callback</i></Url>
            <ZoomLevel>80%</ZoomLevel>
            <svg width="28" height="30" viewBox="0 0 28 30">
              <circle cx="14" cy="15" r="13.300" stroke="#f7f7f8" strokeWidth="1.200" />
              <path d="M11 6H17V16H21L14 25L7 16H11Z" fill="#e5e6e6" stroke="#f8f8f8" strokeWidth="1" />
            </svg>
            <BookmarkStar width="32" height="32" viewBox="0 0 32 32">
              <path d="M14.500 3.200Q16 .4 17.500 3.200L20.300 9.800Q20.700 10.800 21.800 10.900L28.800 11.700Q32 12.200 29.800 14.500L25 19.300Q24.200 20 24.500 21L26.500 28Q27 31.500 24 29.800L17 25.800Q16 25.300 15 25.800L8 29.800Q5 31.500 5.500 28L7.500 21Q7.800 20 7 19.300L2.200 14.500Q0 12.200 3.200 11.700L10.200 10.900Q11.300 10.800 11.700 9.800Z" />
            </BookmarkStar>
          </AddressBar>
          <ToolGroup>
            <svg width="28" height="26" viewBox="0 0 28 26"><path d="M4 1.400H24Q26.600 1.400 26.600 4V11A12.600 12.600 0 0 1 1.400 11V4Q1.400 1.400 4 1.400ZM8 9L14 14.800L20 9" /></svg>
            <svg width="30" height="30" viewBox="0 0 30 30">
              <circle cx="15" cy="15" r="13.600" /><circle cx="15" cy="11" r="4.800" fill={chrome} stroke="none" /><path d="M7.500 18.200H22.500C22 22 19 24 15 24C11 24 8 22 7.500 18.200Z" fill={chrome} stroke="none" />
            </svg>
            <svg width="28" height="32" viewBox="0 0 28 32"><path d="M1.400 14.500V11.500Q1.400 9 4 9H9.500V5.600A4.200 4.200 0 0 1 17.900 5.600V9H24Q26.400 9 26.400 11.500V28Q26.400 30.500 24 30.500H4Q1.400 30.500 1.400 28V23H4.500A4.200 4.200 0 0 0 4.500 14.500Z" /></svg>
            <svg width="26" height="22" viewBox="0 0 26 22"><path d="M2 2.200H24M2 10.800H24M2 19.400H24" /></svg>
          </ToolGroup>
        </Toolbar>

        <Hero>
          <HeroTitle>My Account</HeroTitle>
          <HeroSubtitle>Oops!, something went wrong</HeroSubtitle>
        </Hero>
        <Notice>
          <p>There could be a misconfiguration in the system or a service outage. We track these errors automatically, but if the problem persists feel free to contact us.</p>
          <p>Please try again.</p>
        </Notice>
        <Details>
          <Columns>
            <div>
              <ColumnTitle>TECHNICAL DETAILS</ColumnTitle>
              <ToggleLink>Hide details for this error</ToggleLink>
            </div>
            <div>
              <ColumnTitle>SUPPORT</ColumnTitle>
              <SupportList>
                <SupportLink $track={0.05}>
                  <svg width="32" height="24" viewBox="0 0 32 24" fill="#c6c7cb">
                    <circle cx="11.500" cy="5.500" r="5" /><circle cx="23" cy="7.300" r="4" />
                    <path d="M0 23C0 16 5 12.700 11 12.700C13 12.700 14.500 13 15.500 13.500C12.500 16 11.300 19 11.300 23ZM14 23C14 17.500 17.500 14.500 23 14.500C28.500 14.500 32 17.500 32 23Z" />
                  </svg>
                  Get Help
                </SupportLink>
                <SupportLink $track={0.25}>
                  <svg width="32" height="25" viewBox="0 0 32 25"><rect width="32" height="25" rx="2.500" fill="#d3d4d7" /><path d="M3 3.500L16 13L29 3.500" fill="none" stroke="#f5f6fa" strokeWidth="1.800" /></svg>
                  ukes@intoglobal.com
                </SupportLink>
              </SupportList>
            </div>
          </Columns>
          <ErrorCard>
            <ErrorLine $track={-0.12}><b>access_denied</b>: Password login via OIDC-conformant clients with externally-hosted</ErrorLine>
            <ErrorLine $track={0.1}>login pages is unsupported. Alternatively, login could have been initiated from the</ErrorLine>
            <ErrorLine $track={0.26}>wrong place (e.g., a bookmark).</ErrorLine>
            <CardFooter>
              <LogButton>VIEW LOG</LogButton>
              <Tracking><b>TRACKING ID:</b> 70e64ee431ccf7f13abb</Tracking>
            </CardFooter>
          </ErrorCard>
        </Details>
      </Window>

      <DockBar>
        <Slot><Finder /><RunningDot /></Slot>
        <Slot><Launchpad /></Slot>
        <Slot><Safari /></Slot>
        <Slot><Firefox /><RunningDot /></Slot>
        <Slot><Maps /></Slot>
        <Slot><FaceTime /></Slot>
        <Slot><Reminders /></Slot>
        <Slot><Freeform /></Slot>
        <Slot><AppleTv /></Slot>
        <Slot><Music /></Slot>
        <Slot><AppStore /><Badge>11</Badge></Slot>
        <Slot><Settings /><Badge>1</Badge></Slot>
        <Slot><Rocket /></Slot>
        <Slot><Slack /><RunningDot /></Slot>
        <Slot><Zoom /><RunningDot $tint="#2f6a5c" /></Slot>
        <Slot><Telegram /></Slot>
        <Slot><Chrome /></Slot>
        <Slot><PyCharm /></Slot>
        <Slot><Wps /></Slot>
        <Slot><Idle /></Slot>
        <Slot><Terminal /></Slot>
        <Divider />
        <Slot><Mail /></Slot>
        <Slot><WhatsAppTile /></Slot>
        <Slot><PdfExpert /></Slot>
        <Divider />
        <Slot><Papers /></Slot>
        <Slot><Trash /></Slot>
      </DockBar>
    </Desktop>
  );
}
